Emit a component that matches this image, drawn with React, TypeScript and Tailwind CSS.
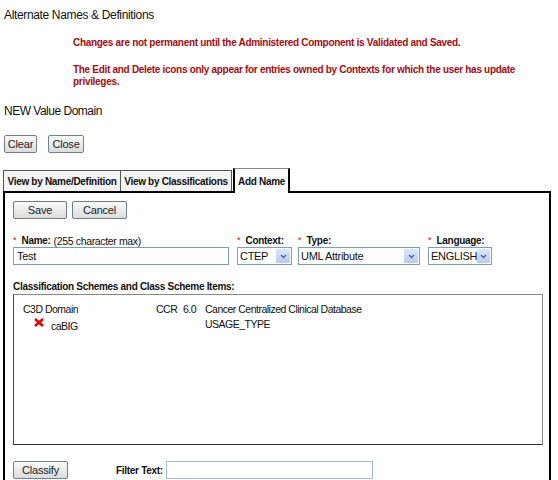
import React from 'react';

const FONT = { fontFamily: '"Liberation Sans", Arial, sans-serif' };

const Btn = ({ label, className = '' }: { label: string; className?: string }) => (
  <div
    className={`h-[18px] flex items-center justify-center rounded-[2px] border border-[#6f7f95] bg-gradient-to-b from-[#fafafa] to-[#dcdcdc] text-[11px] tracking-[-0.2px] text-[#222] ${className}`}
  >
    {label}
  </div>
);

const Select = ({ value, width }: { value: string; width: string }) => (
  <div className={`h-[18px] ${width} flex items-center border border-[#7f9db9] bg-white`}>
    <span className="flex-1 pl-[2px] text-[11px] tracking-[-0.3px] text-[#111] leading-none whitespace-nowrap">
      {value}
    </span>
    <span className="w-[14px] h-[14px] mr-[1px] flex items-center justify-center bg-gradient-to-b from-[#dde7fd] to-[#b7cbf6] rounded-[1px]">
      <svg width="7" height="5" viewBox="0 0 7 5">
        <path d="M1 1 L3.5 3.5 L6 1" fill="none" stroke="#4d6185" strokeWidth="1.3" />
      </svg>
    </span>
  </div>
);

const Label = ({ text, extra }: { text: string; extra?: string }) => (
  <div className="flex items-center h-[12px] leading-[12px] whitespace-nowrap">
    <span className="text-[#d00] text-[9px] mr-[5px] -mt-[2px]">*</span>
    <span className="font-bold text-[10px] tracking-[-0.3px] text-[#111]">{text}</span>
    {extra && <span className="ml-[3px] text-[10.5px] tracking-[-0.35px] text-[#111]">{extra}</span>}
  </div>
);

const App: React.FC = () => {
  return (
    <div className="w-[558px] h-[480px] overflow-hidden bg-white text-[#111]" style={FONT}>
      {/* Header */}
      <div className="pt-[8px] pl-[4px] text-[12px] leading-[14px] tracking-[-0.35px]">Alternate Names &amp; Definitions</div>

      <div className="pl-[73px] pr-[20px] text-[10px] leading-[12px] tracking-[-0.3px] font-bold text-[#a50d12]">
        <p className="mt-[15px]">Changes are not permanent until the Administered Component is Validated and Saved.</p>
        <p className="mt-[15px]">
          The Edit and Delete icons only appear for entries owned by Contexts for which the user has update privileges.
        </p>
      </div>

      <div className="mt-[16px] pl-[4px] text-[12px] leading-[14px] tracking-[-0.5px]">NEW Value Domain</div>

      <div className="mt-[17px] pl-[4px] flex gap-[11px]">
        <Btn label="Clear" className="w-[33px]" />
        <Btn label="Close" className="w-[36px]" />
      </div>

      {/* Tabs */}
      <div className="mt-[15px] ml-[3px] flex items-end relative z-10 whitespace-nowrap text-[10px] tracking-[-0.3px] font-bold">
        <div className="h-[21px] w-[118px] flex items-center justify-center border border-b-0 border-[#555] bg-[#f3f3f3]">
          View by Name/Definition
        </div>
        <div className="h-[21px] w-[111px] flex items-center justify-center border border-l-0 border-b-0 border-[#555] bg-[#f3f3f3]">
          View by Classifications
        </div>
        <div className="h-[25px] w-[57px] -mb-[2px] ml-[1px] flex items-center justify-center border-2 border-b-0 border-black border-t border-t-[#888] bg-white">
          Add Name
        </div>
      </div>

      {/* Panel */}
      <div className="ml-[3px] w-[548px] h-[300px] border-2 border-black border-b-0 pl-[8px] pt-[8px]">
        <div className="flex gap-[5px]">
          <Btn label="Save" className="w-[54px]" />
          <Btn label="Cancel" className="w-[55px]" />
        </div>

        <div className="mt-[16px] flex">
          <div className="w-[224px]">
            <Label text="Name:" extra="(255 character max)" />
            <div className="h-[18px] w-[216px] border border-[#7f9db9] flex items-center pl-[3px] text-[11px] tracking-[-0.3px]">Test</div>
          </div>
          <div className="w-[61px]">
            <Label text="Context:" />
            <Select value="CTEP" width="w-[55px]" />
          </div>
          <div className="w-[130px]">
            <Label text="Type:" />
            <Select value="UML Attribute" width="w-[122px]" />
          </div>
          <div>
            <Label text="Language:" />
            <Select value="ENGLISH" width="w-[64px]" />
          </div>
        </div>

        <div className="mt-[16px] text-[10px] leading-[12px] tracking-[-0.3px] font-bold">Classification Schemes and Class Scheme Items:</div>

        <div className="mt-[1px] w-[530px] h-[151px] border border-[#8a8a8a] border-b-[#333] border-l-[#444] pt-[7px] pl-[9px] text-[10.5px] leading-[15px] tracking-[-0.5px]">
          <div className="flex">
            <span className="w-[133px]">C3D Domain</span>
            <span className="w-[27px]">CCR</span>
            <span className="w-[22px]">6.0</span>
            <span>Cancer Centralized Clinical Database</span>
          </div>
          <div className="flex">
            <span className="w-[182px] flex items-start pl-[11px]">
              <svg width="10" height="9" viewBox="0 0 10 9" className="mt-[1px]">
                <path d="M1 1 L9 8 M9 1 L1 8" stroke="#e00000" strokeWidth="2.5" />
              </svg>
              <span className="ml-[7px] mt-[2px]">caBIG</span>
            </span>
            <span>USAGE_TYPE</span>
          </div>
        </div>

        <div className="mt-[16px] flex items-center">
          <Btn label="Classify" className="w-[55px]" />
          <span className="ml-[48px] text-[10px] tracking-[-0.3px] font-bold">Filter Text:</span>
          <div className="ml-[3px] h-[18px] w-[207px] border border-[#a5bcd8] bg-white" />
        </div>
        <div className="mt-[1px] border-t-2 border-[#333]" />
      </div>
    </div>
  );
};

export default App;
